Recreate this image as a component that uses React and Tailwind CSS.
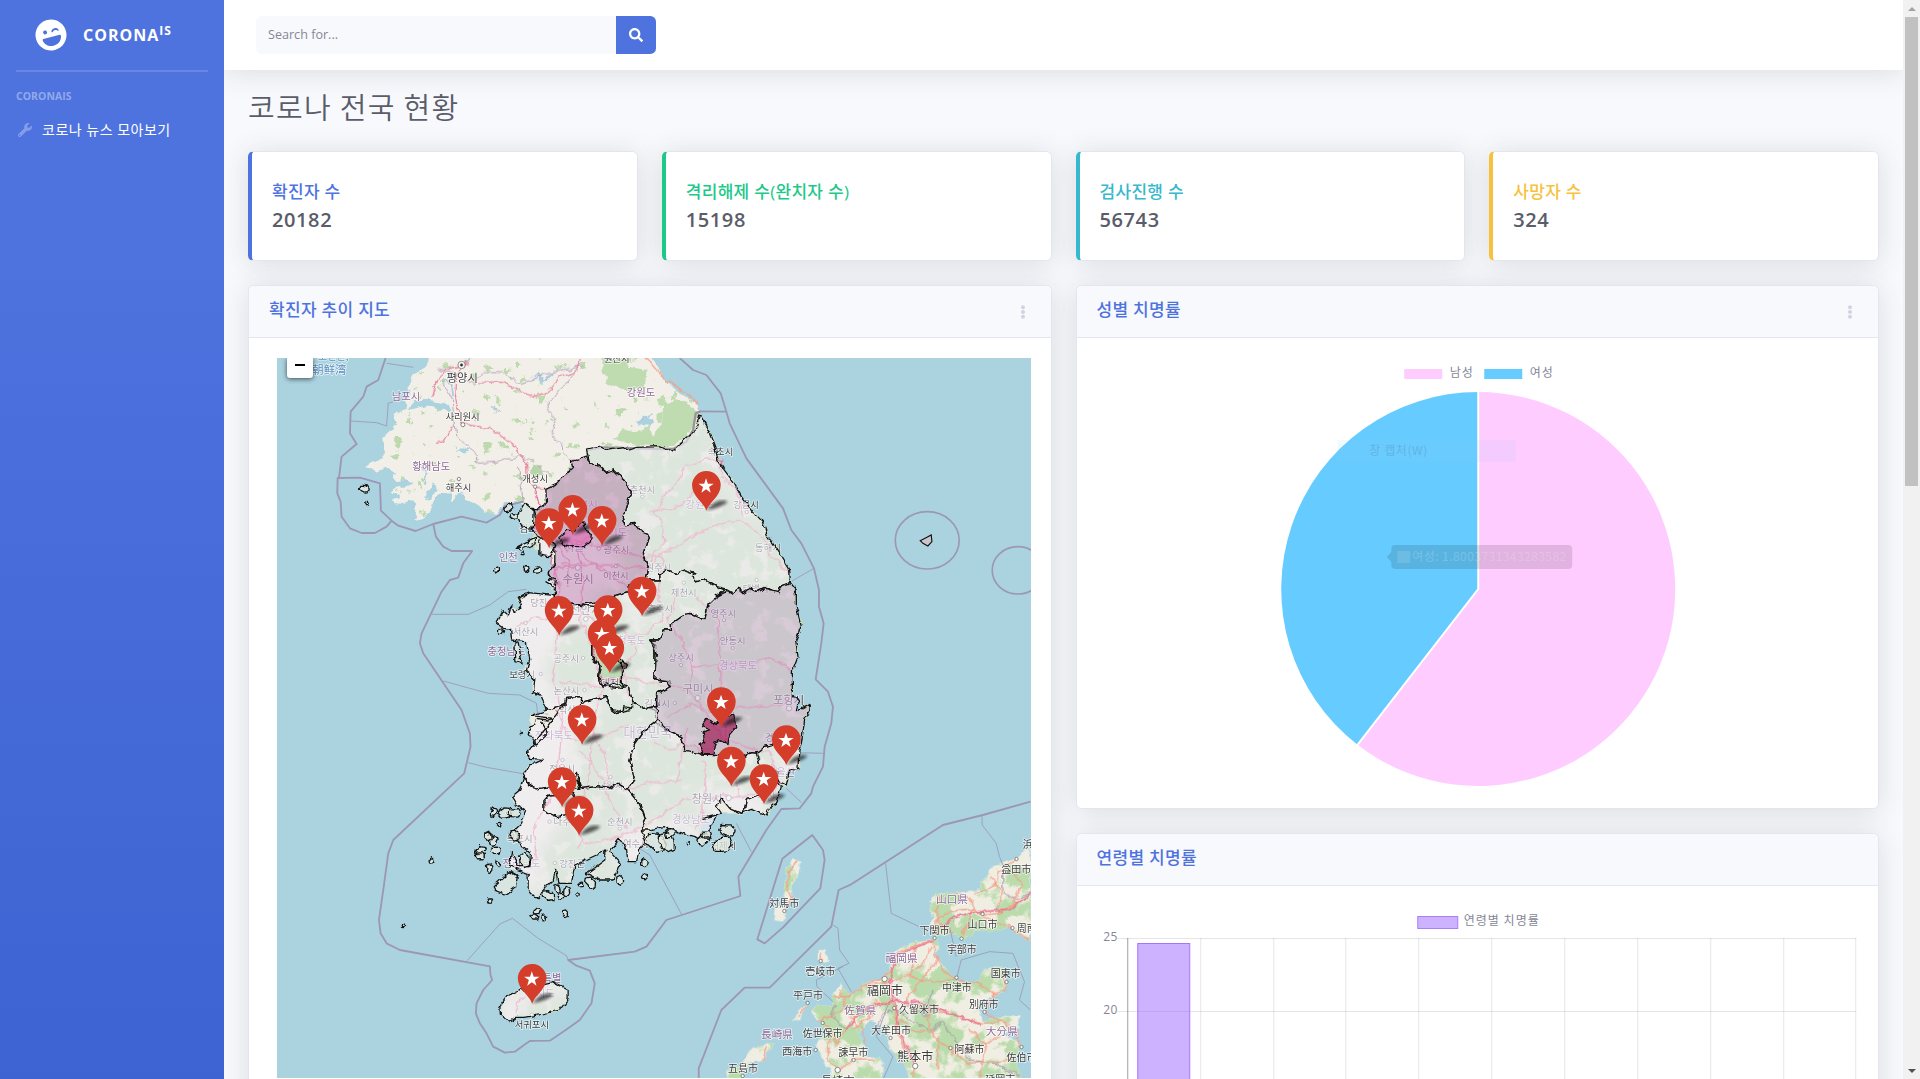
import React from "react";
import { FaLaughWink, FaWrench, FaSearch, FaEllipsisV } from "react-icons/fa";

const stats = [
  { label: "확진자 수", value: "20182", border: "border-l-[#4e73df]", text: "text-[#4e73df]" },
  { label: "격리해제 수(완치자 수)", value: "15198", border: "border-l-[#1cc88a]", text: "text-[#1cc88a]" },
  { label: "검사진행 수", value: "56743", border: "border-l-[#36b9cc]", text: "text-[#36b9cc]" },
  { label: "사망자 수", value: "324", border: "border-l-[#f6c23e]", text: "text-[#f6c23e]" },
];

const NORTH =
  "M485 0L470 50L430 72L412 108L425 135L395 152L412 172L370 195L382 215L340 265L345 310L320 330L285 355L320 362L350 352L375 365L370 390L395 400L365 425L388 440L365 455L402 460L430 450L440 480L430 510L455 505L475 490L500 440L520 425L545 430L540 455L575 425L590 450L625 465L640 480L680 495L700 460L750 455L790 475L830 470L950 400L1290 320L1290 190L1280 158L1245 140L1200 105L1170 60L1130 0Z";
const SOUTH =
  "M950 318L905 335L890 370L860 400L828 415L830 455L810 480L790 478L800 515L780 570L810 615L838 618L855 645L835 670L855 735L780 728L745 745L755 765L735 790L725 765L715 795L700 782L680 820L700 835L722 838L725 870L770 875L780 930L770 960L795 985L790 1030L815 1040L832 1080L785 1097L775 1150L800 1185L770 1210L780 1225L820 1228L775 1250L762 1280L750 1320L725 1340L740 1365L770 1385L755 1420L735 1440L755 1490L785 1510L780 1550L745 1550L725 1505L718 1550L775 1570L775 1620L800 1645L825 1615L850 1590L857 1555L865 1600L905 1600L915 1545L980 1515L1005 1500L1005 1530L950 1570L990 1590L1030 1590L1052 1540L1020 1505L1050 1465L1070 1495L1075 1535L1100 1535L1110 1500L1130 1480L1140 1440L1180 1430L1240 1450L1290 1465L1300 1420L1355 1390L1415 1390L1445 1378L1490 1398L1520 1360L1535 1310L1555 1300L1560 1260L1585 1255L1590 1210L1605 1110L1620 1085L1622 1062L1580 1085L1568 1030L1568 965L1585 920L1578 870L1595 830L1580 770L1580 720L1562 700L1560 660L1530 610L1495 560L1478 515L1450 485L1415 440L1390 395L1360 355L1335 290L1315 240L1290 195L1275 245L1250 265L1210 303L1170 290L1100 292L1080 300L1060 290L1010 298L990 288L950 297ZM690 1970L715 1935L770 1915L850 1898L895 1920L895 1945L870 1980L805 1995L765 2002L738 2002L718 2015L692 1990Z";
const JAPAN =
  "M1143 55L1100 80L1040 105L1010 140L975 185L920 188L860 190L840 215L850 260L845 300L858 320L900 310L945 330L975 300L1040 305L1080 290L1143 335ZM545 530L550 490L570 462L590 480L605 500L640 465L690 450L720 420L735 365L800 335L860 325L870 350L860 380L900 430L920 450L980 460L1000 420L1060 410L1075 455L1060 490L1010 510L985 540L1000 570L1060 560L1110 555L1105 590L1060 610L1110 640L1100 700L1120 760L790 760L760 700L720 660L715 610L690 585L660 570L640 600L625 610L650 650L640 680L690 680L700 720L690 760L560 760L520 690L500 640L530 610L520 590L485 545L500 525ZM430 85L455 92L450 120L430 160L425 200L400 275L370 270L375 240L410 215L402 180L415 110ZM505 360L530 360L540 395L505 400ZM475 520L450 570L430 580L445 545ZM330 645L375 640L350 670L340 690L300 700L280 720L285 760L230 760L232 720L270 710L300 670Z";

const NATIONAL =
  "M355 0L325 90L290 110L280 140L242 185L240 250L260 282L215 320L207 384M203 384L202 430L212 455L215 500L240 535L275 549L315 549L350 530L365 512L333 482L330 400L270 383ZM365 512L385 527L437 543L490 522L575 500L650 518L690 495L705 468L760 455M490 522L498 560L520 590L545 603L607 603L580 640L565 683L540 690L515 725L455 850L450 880L460 910L575 1080L600 1150L602 1190L583 1270L370 1470L355 1510L340 1620L327 1710L332 1750L350 1780L390 1800L660 1849L662 1875L667 1890L640 1920L620 1960L618 1990L630 2020L650 2050L670 2090L705 2108L735 2105L770 2080L780 2073L840 2072L880 2045L930 2010L965 1960L975 1900L960 1862L920 1847L895 1830L1095 1805L1130 1790L1190 1710L1412 1638L1406 1580L1490 1440L1535 1377L1590 1375L1625 1330L1630 1310L1660 1250L1665 1190L1685 1120L1690 1070L1675 1025L1638 988L1655 880L1662 820L1648 770L1648 720L1633 655L1595 580L1565 540L1540 475L1430 325L1380 220L1370 185L1353 130L1310 75L1270 60L1230 24M1290 184L1370 185M1628 1455L1660 1500L1665 1530L1652 1615L1540 1732L1485 1780L1463 1768L1538 1526ZM1287 2190L1287 2155L1355 1980L1425 1913L1500 1913L1685 1730L1707 1620L1745 1603L2020 1425L2140 1395L2283 1355";
const MINOR =
  "M242 213L320 218L350 228L355 160L400 145M350 40L430 52M485 793L595 793L660 765L715 725L770 718M520 993L655 1030L750 1035L800 1060L803 1088L835 1093M595 1238L650 1252L765 1272M592 1832L690 1722L728 1705L805 1765L890 1817L895 1830M1140 1515L1235 1692M1140 1515L1100 1490M1567 693L1633 655M1590 1208L1660 1210M1550 1315L1595 1357M1400 1420L1445 1505M2137 1395L2138 1425L2180 1480L2190 1520L2200 1545M1848 1540L1865 1690L1970 1740M1690 1725L1705 1735L1710 1800L1738 1840L1705 1855L1745 1925M1640 1890L1720 1850M1640 1890L1642 1910L1690 1955M2060 1890L2075 1830L2160 1805L2230 1810L2265 1895L2250 1950L2283 1980M1855 1965L1820 2060L1870 2120L1840 2190M2040 1730L2060 1820";
const NORTH_ADMIN =
  "M505 55L560 75L610 100L640 65L700 65L750 100L830 75L870 60L940 50M935 40L900 85L840 155L830 180L860 210L840 250L880 285L882 310L905 335M515 95L550 150L560 260L620 310L625 340L690 335L745 318L790 330M745 350L755 410L760 455M800 345L840 370";
const NORTH_ROADS =
  "M590 35L560 75L558 130L568 190L579 222L660 235L730 280L770 340L772 385L795 412L830 415M627 98L690 100L740 115L800 140L830 130L870 80L925 60L935 25M600 40L540 55L500 90L485 140M550 225L520 275L498 280";
const SOUTH_ROADS =
  "M795 412L820 520L870 560L920 590L940 700L930 800L960 880L1000 1000L975 1100L960 1250L940 1360L930 1490M910 570L1000 590L1100 620L1180 620L1165 720L1180 800L1130 850L1000 870L940 760M840 620L870 700L865 820L850 1000L880 1100L870 1200L860 1300L790 1440L800 1530M920 650L860 650L850 710M870 640L1140 655L1165 620L1280 550L1360 520L1410 510L1480 560L1510 620L1560 680M1140 485L1230 470L1290 400M1140 640L1160 600L1185 575L1180 510L1150 490L1200 420L1250 350L1310 325L1355 340L1355 380L1415 440L1420 500M1225 720L1195 810L1240 880L1270 955L1340 945L1440 940L1500 920L1570 960M1270 955L1260 1020L1330 1120L1355 1160L1430 1190L1500 1210L1530 1300L1500 1350M1345 790L1350 900L1350 1000L1355 1100L1390 1220L1410 1340M1000 1000L1060 980L1150 1000L1260 1020M930 1200L1010 1300L1060 1320L1140 1300L1240 1290M940 1480L1050 1460L1140 1420L1240 1350L1320 1340L1420 1340L1490 1330M1280 740L1320 780L1340 790M970 1140L1010 1230L1010 1330L1070 1440M740 830L800 800L870 820M1150 1180L1200 1200L1240 1180L1290 1200L1340 1190M1360 1060L1420 1075L1550 1060M1200 1100L1260 1060L1340 1090M1220 1300L1240 1200L1250 1130M1280 1440L1310 1330L1300 1230M930 600L960 640L1000 660L1090 720L1140 790M850 560L890 600L960 560M870 590L900 640L890 710M870 1000L940 1000L1000 1010M860 1080L900 1170L1000 1160L1080 1120M1010 800L1060 840L1100 900L1060 960L1080 1040M735 1985L750 1950L780 1930";
const JAPAN_ROADS =
  "M850 330L800 345L745 370L725 420L690 450L640 470L600 500L555 500M850 340L860 380L880 420L920 448L990 465L1040 490L1020 520L1000 550L1060 575L1100 600L1110 650M705 450L720 500L735 540L740 600L770 660L800 700L790 744M735 510L650 530L600 580L560 640L540 590L515 580M770 520L830 540L900 550L1000 580L1050 575M845 350L820 400L770 440L720 460L650 470M870 380L830 430L760 520M905 310L860 270L900 245L970 235L1000 255L1050 250L1100 220L1143 190M880 200L860 240L860 310M920 190L970 210L965 260L940 310M975 190L1040 160L1050 120L1100 85M1000 260L1080 290L1143 330M1020 140L1060 190L1040 240M1090 130L1120 160L1090 220M600 560L640 600L650 640M540 620L535 690L570 720L612 690L680 690M570 480L590 540L545 560L500 570M800 350L780 440L850 460L920 450M830 540L850 620L900 655L960 660L1050 620M870 620L860 720M900 655L950 700L1100 690M740 560L790 600L870 610M960 600L1010 640L990 740M1060 420L1070 480L1030 500M680 510L660 560L610 600M445 90L418 125L412 165L425 205L410 240M470 530L445 560M350 650L340 690M515 370L515 390";

/* Outlines of provinces and metropolitan cities with the fill of their case count. */
const provinces = [
  ["#f1eef6", "M950 297L990 288L1010 298L1060 290L1080 300L1100 292L1170 290L1210 303L1250 265L1275 245L1290 195L1315 240L1335 290L1345 330L1360 355L1390 395L1415 440L1450 485L1478 515L1495 560L1530 610L1560 660L1562 698L1540 705L1525 725L1490 715L1460 725L1440 715L1420 728L1405 715L1390 730L1365 716L1340 710L1305 690L1280 695L1265 680L1275 670L1245 660L1220 670L1190 660L1170 675L1172 690L1125 690L1135 650L1120 610L1138 555L1115 545L1095 520L1065 525L1060 500L1070 465L1085 430L1065 390L1045 375L1030 360L1010 368L985 345L960 340Z"],
  ["#c994c7", "M950 318L905 335L908 352L890 370L860 400L828 415L830 455L810 480L790 478L800 515L780 540L838 580L855 590L855 640L835 670L855 705L857 740L858 755L920 765L985 755L1040 735L1075 725L1075 705L1125 690L1135 650L1120 610L1138 555L1115 545L1095 520L1065 525L1060 500L1070 465L1085 430L1065 390L1045 375L1030 360L1010 368L985 345L960 340Z"],
  ["#df65b0", "M870 560L895 540L910 545L940 515L950 545L965 550L962 575L945 590L900 590L875 580Z"],
  ["#f1eef6", "M810 570L840 560L858 590L838 620L810 615ZM830 690L860 685L855 720Z"],
  ["#f1eef6", "M855 737L780 728L745 745L755 765L735 790L725 765L715 795L700 782L680 820L700 835L722 838L725 870L770 875L780 930L770 960L795 985L790 1030L815 1040L832 1080L885 1060L888 1042L935 1040L935 1060L1010 1040L1020 1075L1060 1088L1062 1070L1090 1075L1090 1060L1075 1010L1040 1015L1000 1010L985 990L990 950L968 920L970 870L1000 830L985 770L920 765L858 755Z"],
  ["#f1eef6", "M1000 840L985 770L1040 735L1075 725L1125 690L1172 690L1170 675L1190 660L1220 670L1245 660L1275 670L1265 680L1280 695L1305 690L1340 710L1365 720L1315 765L1305 810L1260 790L1240 795L1205 820L1205 840L1180 840L1170 870L1140 870L1155 890L1155 990L1200 995L1205 1010L1160 1030L1162 1070L1120 1075L1090 1055L1075 1010L1055 1005L1055 975L1070 945L1020 900Z"],
  ["none", "M968 880L990 850L1010 890L1035 930L1055 940L1055 980L1060 1010L1030 1000L1020 1010L1010 1000L1000 1012L988 985L995 950L970 930Z"],
  ["#d4b9da", "M1580 720L1580 770L1595 830L1578 870L1585 920L1568 965L1568 1030L1585 1055L1580 1085L1610 1070L1622 1062L1620 1085L1605 1110L1595 1180L1510 1182L1485 1190L1465 1210L1440 1208L1410 1225L1370 1215L1295 1212L1245 1200L1235 1160L1200 1145L1160 1120L1155 1080L1140 1075L1160 1070L1162 1030L1205 1010L1190 995L1155 990L1160 910L1140 870L1170 870L1180 840L1205 840L1205 820L1240 795L1260 790L1305 810L1315 765L1340 740L1370 725L1390 730L1405 715L1420 728L1440 715L1460 725L1490 715L1525 725L1540 705L1562 698Z"],
  ["#980043", "M1392 1090L1398 1130L1380 1150L1375 1180L1350 1172L1335 1180L1330 1210L1300 1212L1288 1185L1305 1175L1300 1145L1320 1140L1295 1130L1310 1108L1340 1120Z"],
  ["#f1eef6", "M832 1080L785 1097L850 1105L835 1110L800 1105L775 1150L800 1185L835 1150L815 1115M790 1185L770 1210L780 1225L820 1228L775 1250L762 1280L785 1312L800 1317L840 1310L920 1290L935 1315L980 1310L1020 1315L1045 1300L1075 1317L1095 1290L1080 1230L1095 1180L1120 1145L1165 1110L1162 1070L1120 1075L1090 1055L1085 1078L1040 1088L1020 1075L1010 1040L935 1060L935 1040L888 1042L885 1060Z"],
  ["#f1eef6", "M762 1280L750 1320L725 1340L740 1365L770 1385L755 1420L735 1440L755 1490L785 1510L780 1550L745 1550L725 1505L718 1550L775 1570L775 1620L800 1645L825 1615L850 1590L857 1555L865 1600L905 1600L915 1545L980 1515L1005 1500L1005 1530L950 1570L990 1590L1030 1590L1052 1540L1020 1505L1050 1465L1070 1495L1075 1535L1100 1535L1110 1500L1130 1480L1115 1440L1128 1410L1110 1360L1075 1317L1045 1300L1020 1315L980 1310L935 1315L920 1270L930 1315L840 1310L800 1317L785 1312Z"],
  ["none", "M840 1335L905 1330L920 1350L905 1390L860 1400L822 1382L822 1355Z"],
  ["#f1eef6", "M1165 1110L1200 1145L1235 1160L1245 1200L1295 1212L1370 1215L1410 1225L1440 1208L1465 1210L1470 1245L1530 1270L1500 1320L1430 1350L1425 1375L1415 1390L1380 1375L1355 1345L1340 1370L1355 1390L1300 1405L1340 1395L1320 1440L1290 1465L1240 1450L1180 1430L1140 1440L1115 1440L1128 1410L1110 1360L1075 1317L1095 1290L1080 1230L1095 1180L1120 1145Z"],
  ["#f1eef6", "M1510 1182L1485 1190L1460 1210L1470 1245L1500 1270L1520 1290L1550 1305L1560 1260L1585 1255L1588 1200L1595 1180Z"],
  ["#f1eef6", "M1520 1290L1500 1320L1430 1350L1425 1375L1415 1390L1445 1378L1490 1398L1495 1380L1520 1360L1535 1310Z"],
  ["#f1eef6", "M690 1970L715 1935L770 1915L850 1898L895 1920L895 1945L870 1980L805 1995L765 2002L738 2002L718 2015L692 1990Z"],
];

const islands = [
  "M720 1565L745 1580L740 1610L710 1633L675 1620L670 1610Z",
  "M765 460L790 480L788 535L755 530L742 500Z",
  "M742 592L802 562L795 582L750 600Z",
  "M735 875L745 880L757 942L738 935Z",
];
const DOKDO = "M1952 572L1975 560L1985 555L1987 575L1975 588L1960 580Z";

const islets = [
  [655, 1458, 13], [670, 1472, 13], [632, 1500, 13], [630, 1518, 12], [678, 1502, 13], [685, 1538, 8], [658, 1555, 11], [485, 1532, 8], [403, 1728, 6],
  [660, 1653, 9], [835, 1637, 17], [865, 1618, 12], [890, 1625, 11], [875, 1642, 9], [932, 1605, 7], [922, 1633, 6], [963, 1597, 16], [1050, 1590, 12],
  [1123, 1580, 9], [803, 1683, 10], [793, 1700, 10], [822, 1702, 8], [887, 1691, 11], [1125, 1538, 13], [672, 1387, 12], [705, 1390, 18], [732, 1388, 17],
  [687, 1423, 6], [655, 1460, 12], [693, 847, 9], [715, 473, 13], [733, 500, 11], [283, 417, 14], [290, 460, 6], [680, 660, 8], [770, 656, 8], [803, 662, 9],
  [758, 610, 5], [1160, 1478, 30], [1192, 1475, 28], [1255, 1480, 7], [1300, 1470, 16], [1358, 1484, 26], [1372, 1440, 22], [735, 1455, 15], [765, 1530, 20],
  [756, 1149, 2], [1200, 1450, 15], [1310, 1455, 13],
];
const isletPath = ([x, y, r], i) =>
  "M" +
  [0, 1, 2, 3, 4, 5, 6, 7]
    .map((k) => {
      const q = r * (0.65 + 0.5 * Math.abs(Math.sin(i * 3.7 + k * 2.3)));
      const a = (k * Math.PI) / 4;
      return (x + q * Math.cos(a)).toFixed(1) + " " + (y + q * Math.sin(a)).toFixed(1);
    })
    .join("L") +
  "Z";

const pins = [
  [1310, 363], [909, 435], [997, 468], [838, 475], [1117, 680], [1015, 736], [868, 738], [997, 808], [1020, 850],
  [1355, 1012], [937, 1065], [1550, 1126], [1385, 1190], [1483, 1243], [877, 1252], [928, 1338], [787, 1842],
];

const P = "#8d6a96";
const K = "#3c3c3c";
const labels = [
  ["조선만,", 190, 30, 30, "#5b8fc0"], ["朝鲜湾", 178, 71, 34, "#5b8fc0"], ["평양시", 577, 97, 34, K], ["남포시", 408, 149, 31, P], ["사리원시", 578, 210, 28, K],
  ["황해남도", 484, 359, 31, P], ["해주시", 566, 424, 28, K], ["개성시", 796, 397, 28, K], ["강원도", 1114, 138, 31, P], ["원산시", 1041, 35, 28, K],
  ["춘천시", 1118, 429, 28, K], ["의정부시", 927, 474, 31, P], ["김포시", 788, 545, 28, K], ["경기도", 1030, 557, 31, P], ["서울", 913, 603, 34, P],
  ["광주시", 1040, 610, 28, K], ["인천", 715, 633, 31, P], ["수원시", 925, 700, 34, K], ["이천시", 1038, 686, 28, K], ["원주시", 1166, 664, 28, K],
  ["속초시", 1352, 316, 28, K], ["강원도", 1290, 474, 31, P], ["강릉시", 1429, 474, 28, K], ["동해시", 1495, 603, 28, K], ["태백시", 1458, 726, 28, K],
  ["제천시", 1242, 738, 28, K], ["당진시", 820, 768, 28, K], ["천안시", 948, 793, 34, K], ["서산시", 767, 856, 28, K], ["충청남도", 710, 915, 31, P],
  ["보령시", 757, 984, 28, K], ["공주시", 889, 937, 28, K], ["대전", 1020, 1010, 31, P], ["논산시", 890, 1033, 28, K], ["충청북도", 1071, 881, 31, P],
  ["충주시", 1171, 786, 28, K], ["익산시", 905, 1088, 28, K], ["전라북도", 852, 1168, 31, P], ["정읍시", 877, 1265, 28, K], ["남원시", 1022, 1317, 28, K],
  ["대한민국", 1135, 1162, 40, P], ["김천시", 1162, 1070, 28, K], ["영주시", 1361, 800, 28, K], ["안동시", 1389, 883, 28, K], ["상주시", 1234, 934, 28, K],
  ["경상북도", 1405, 956, 31, P], ["구미시", 1285, 1028, 34, K], ["포항시", 1557, 1061, 34, K], ["경주시", 1525, 1173, 28, K], ["울산", 1548, 1277, 31, P],
  ["창원시", 1312, 1358, 34, K], ["경상남도", 1264, 1418, 31, P], ["부산", 1490, 1350, 31, P], ["나주시", 890, 1426, 28, K], ["순천시", 1050, 1425, 28, K],
  ["목포시", 750, 1477, 28, K], ["전라남도", 755, 1552, 31, P], ["강진군", 907, 1552, 28, K], ["여수시", 1098, 1490, 28, K], ["거제시", 1361, 1496, 28, K],
  ["제주특별", 818, 1896, 31, P], ["자치도", 812, 1941, 31, P], ["서귀포시", 786, 2033, 28, K],
  ["対馬市", 1544, 1672, 30, K], ["壱岐市", 1652, 1874, 30, K], ["平戸市", 1615, 1947, 30, K], ["佐賀県", 1772, 1992, 32, P], ["長崎県", 1522, 2063, 32, P],
  ["佐世保市", 1659, 2061, 30, K], ["西海市", 1583, 2115, 30, K], ["諫早市", 1751, 2118, 30, K], ["五島市", 1420, 2166, 30, K], ["長崎市", 1704, 2205, 34, K],
  ["福岡県", 1896, 1836, 32, P], ["福岡市", 1846, 1935, 36, K], ["久留米市", 1948, 1988, 30, K], ["大牟田市", 1864, 2052, 30, K], ["熊本市", 1937, 2133, 36, K],
  ["阿蘇市", 2100, 2109, 30, K], ["大分県", 2197, 2056, 32, P], ["別府市", 2143, 1974, 30, K], ["中津市", 2062, 1924, 30, K], ["国東市", 2209, 1882, 30, K],
  ["宇部市", 2077, 1808, 30, K], ["下関市", 1995, 1753, 30, K], ["山口県", 2047, 1660, 32, P], ["山口市", 2139, 1733, 30, K], ["益田市", 2240, 1570, 30, K],
  ["浜田市", 2305, 1494, 30, K], ["周南市", 2287, 1747, 30, K], ["佐伯市", 2256, 2132, 30, K], ["延岡市", 2192, 2200, 30, K],
];
const towns = [
  [579, 224, 6], [567, 387, 5], [796, 410, 5], [1118, 440, 5], [924, 653, 8], [1038, 648, 5], [987, 596, 5], [1431, 486, 5], [1461, 690, 5], [1242, 698, 5],
  [767, 819, 5], [948, 807, 7], [813, 972, 5], [940, 924, 5], [944, 1020, 5], [878, 1230, 5], [1022, 1281, 5], [1363, 810, 5], [1389, 894, 5], [1234, 945, 5],
  [1284, 1044, 8], [1215, 1059, 5], [1558, 1075, 8], [1377, 1344, 8], [839, 1415, 5], [1050, 1436, 5], [855, 1539, 5], [786, 1994, 5], [1544, 1683, 5],
  [1653, 1833, 5], [1614, 1959, 5], [1659, 2019, 5], [1638, 2100, 5], [1752, 2130, 5], [1704, 2160, 8], [1845, 1887, 8], [1874, 1974, 5], [1863, 2064, 5],
  [1937, 2148, 8], [2043, 2094, 5], [2145, 1986, 5], [2061, 1883, 5], [2211, 1896, 5], [2076, 1766, 5], [1995, 1764, 5], [2139, 1692, 5], [2241, 1527, 5],
  [2229, 1734, 5], [2256, 2091, 5], [1419, 2178, 5],
];

function Pin({ x, y }) {
  return (
    <g transform={`translate(${x} ${y})`}>
      <path d="M0 118L22 96Q45 84 64 92Q50 108 0 118Z" fill="#111" opacity="0.65" filter="url(#soft)" />
      <path d="M0 119C-8 94-43 76-43 43A43 43 0 0 1 43 43C43 76 8 94 0 119Z" fill="#d33d2a" />
      <path d="M-1 22L4.500 38L22 38L8 48L13 65L-1 55L-15 65L-10 48L-24 38L-6.500 38Z" fill="#fff" />
    </g>
  );
}

function CoronaMap() {
  return (
    <svg className="block h-[720px] w-full" viewBox="21 24 2262 2160" preserveAspectRatio="none">
      <defs>
        <filter id="rough" x="0" y="0" width="2300" height="2200" filterUnits="userSpaceOnUse" colorInterpolationFilters="sRGB">
          <feTurbulence type="fractalNoise" baseFrequency="0.035" numOctaves="3" seed="4" />
          <feDisplacementMap in="SourceGraphic" scale="22" xChannelSelector="R" yChannelSelector="G" />
        </filter>
        <filter id="jag" x="0" y="0" width="2300" height="2200" filterUnits="userSpaceOnUse" colorInterpolationFilters="sRGB">
          <feTurbulence type="fractalNoise" baseFrequency="0.05" numOctaves="2" seed="9" />
          <feDisplacementMap in="SourceGraphic" scale="17" xChannelSelector="R" yChannelSelector="G" />
        </filter>
        <filter id="forest" x="0" y="0" width="2300" height="2200" filterUnits="userSpaceOnUse" colorInterpolationFilters="sRGB">
          <feTurbulence type="fractalNoise" baseFrequency="0.014" numOctaves="5" seed="12" />
          <feColorMatrix values="0 0 0 0 0.73 0 0 0 0 0.86 0 0 0 0 0.67 9 0 0 0 -4.1" />
        </filter>
        <filter id="fields" x="0" y="0" width="2300" height="2200" filterUnits="userSpaceOnUse" colorInterpolationFilters="sRGB">
          <feTurbulence type="fractalNoise" baseFrequency="0.02" numOctaves="5" seed="33" />
          <feColorMatrix values="0 0 0 0 0.94 0 0 0 0 0.93 0 0 0 0 0.88 9 0 0 0 -5" />
        </filter>
        <filter id="specks" x="0" y="0" width="2300" height="2200" filterUnits="userSpaceOnUse" colorInterpolationFilters="sRGB">
          <feTurbulence type="fractalNoise" baseFrequency="0.03" numOctaves="4" seed="21" />
          <feColorMatrix values="0 0 0 0 0.74 0 0 0 0 0.85 0 0 0 0 0.68 18 0 0 0 -12.2" />
        </filter>
        <filter id="soft"><feGaussianBlur stdDeviation="4" /></filter>
        <filter id="haze" x="-20%" y="-20%" width="140%" height="140%"><feGaussianBlur stdDeviation="22" /></filter>
        <clipPath id="south"><path d={SOUTH} /></clipPath>
        <clipPath id="japan"><path d={JAPAN} transform="translate(1140 1440)" /></clipPath>
        <clipPath id="north"><path d={NORTH} /></clipPath>
      </defs>
      <rect x="0" y="0" width="2300" height="2200" fill="#aad3df" />
      <g filter="url(#rough)">
        <path d={NORTH} fill="#f2efe9" />
        <path d={SOUTH} fill="#bfdab6" />
        <path d={JAPAN} transform="translate(1140 1440)" fill="#f0eee2" />
        <g clipPath="url(#south)">
          <g filter="url(#haze)" fill="#eeebe2">
            <path d="M650 700L860 720L990 760L960 820L880 840L820 950L850 1040L1000 1030L960 1110L900 1160L930 1230L850 1290L900 1340L880 1420L800 1520L820 1600L740 1660L600 1500Z" />
            <path d="M780 560L960 540L1060 640L1060 700L900 750L820 700ZM1260 1330L1400 1320L1500 1340L1480 1420L1350 1420ZM1520 1220L1600 1180L1600 1280L1540 1300ZM1070 740L1140 740L1140 800L1080 820ZM1320 310L1350 310L1470 500L1430 500Z" />
            <path d="M680 1960L770 1910L890 1890L900 1920L780 1940L740 2010L690 2030ZM1040 1440L1150 1420L1300 1440L1300 1500L1040 1560Z" />
          </g>
          <rect x="0" y="0" width="2300" height="2200" filter="url(#fields)" opacity="0.65" />
        </g>
        <g clipPath="url(#japan)"><rect x="0" y="0" width="2300" height="2200" filter="url(#forest)" /></g>
        <g clipPath="url(#north)"><rect x="0" y="0" width="2300" height="2200" filter="url(#specks)" /></g>
        <path d="M995 24L1080 24L1075 50L1130 60L1125 110L1080 125L1010 100L1015 75L995 72ZM1030 270L1060 235L1100 245L1140 230L1150 260L1175 220L1185 160L1210 150L1260 165L1285 190L1270 230L1250 262L1200 292L1100 285ZM1165 145L1185 140L1190 165L1170 170ZM1160 190L1180 185L1175 215L1160 215Z" fill="#bfdcb1" />
        <path d="M1100 210L1125 200L1150 215L1140 230L1115 228ZM545 285L560 300L575 292L600 298L580 310ZM365 395L400 390L430 400L400 415ZM460 440L490 400L500 420L480 450ZM310 215L335 205L345 220ZM430 150L480 150L520 155L545 180L535 190L480 165L430 180L415 175Z" fill="#aad3df" />
        <path d="M785 350L815 345L820 375L795 380L780 370Z" fill="#b7d3a8" />
        <path d="M590 40L600 24M520 90L545 100L550 140M1100 215L1150 190M785 90L800 75L820 95L850 70M660 170L690 180M450 350L470 370L465 400" stroke="#aacbe0" strokeWidth="5" fill="none" />
      </g>
      <path d="M1130 24L1160 60L1190 90L1245 125L1285 160" fill="none" stroke="#f3a088" strokeWidth="4" filter="url(#rough)" />
      <g fill="none" strokeLinejoin="round" filter="url(#rough)">
        <path d={NORTH_ADMIN} stroke="#b8a3bd" strokeWidth="3" />
        <path d={NORTH_ROADS} stroke="#ea7f9b" strokeWidth="3.500" />
        <path d={SOUTH_ROADS} stroke="#e66f98" strokeWidth="4" />
        <g transform="translate(1140 1440)">
          <path d="M735 540L700 560L680 590M735 540L800 580L840 600L880 580L910 620L960 690L1040 700L1110 740M1060 130L1060 180L1100 210L1143 185M560 520L545 560L590 600L600 570M850 480L830 560L760 520" stroke="#a08fa8" strokeWidth="3" />
          <path d={JAPAN_ROADS} stroke="#f3a088" strokeWidth="4" />
          <path d="M850 335L800 350L740 380L720 440L740 540L745 600L800 700M735 510L830 520L900 550L990 580M735 510L640 540L590 600M860 310L900 270L980 245L1080 240L1143 190" stroke="#e87590" strokeWidth="5" />
        </g>
      </g>
      <g fill="none" stroke="#9d96b6" strokeLinejoin="round">
        <path d={NATIONAL} strokeWidth="5.500" />
        <ellipse cx="1973" cy="571" rx="96" ry="86" strokeWidth="5" />
        <ellipse cx="2245" cy="661" rx="77" ry="71" strokeWidth="5" />
        <path d={MINOR} strokeWidth="2.500" />
        <path d="M955 300L990 292L1100 295L1210 297L1250 275L1270 240L1278 190L1292 184" stroke="#9a949a" strokeWidth="7" />
      </g>
      <g fill="#fff" stroke="#555" strokeWidth="2">
        {towns.map(([x, y, r]) => <circle key={`${x}-${y}`} cx={x} cy={y} r={r} />)}
        <circle cx="575" cy="45" r="11" /><circle cx="575" cy="45" r="4" fill="#333" />
      </g>
      <g textAnchor="middle" className="font-['Noto_Sans_CJK_KR','Noto_Sans_CJK_JP',sans-serif]">
        {labels.map(([t, x, y, s, c]) => (
          <text key={`${t}${x}`} x={x} y={y} fontSize={s} fill={c} stroke="#fff" strokeOpacity="0.7" strokeWidth="5" paintOrder="stroke" strokeLinejoin="round">{t}</text>
        ))}
      </g>
      <g stroke="#111" strokeWidth="3.800" strokeLinejoin="round" filter="url(#jag)">
        <g fillOpacity="0.6">{provinces.map(([c, d]) => <path key={d} d={d} fill={c} />)}</g>
        <g fill="#e4eae0" fillOpacity="0.8">
          {islands.map((d) => <path key={d} d={d} />)}
          {islets.map((s, i) => <path key={i} d={isletPath(s, i)} />)}
        </g>
      </g>
      <path d={DOKDO} fill="#cdc5ce" stroke="#111" strokeWidth="3.500" />
      {pins.map(([x, y]) => <Pin key={`${x}-${y}`} x={x} y={y} />)}
    </svg>
  );
}

function PieChart() {
  return (
    <svg className="block h-[470px] w-full font-['Noto_Sans_CJK_KR',sans-serif]" viewBox="1077 338 801 470">
      <rect x="1404" y="369" width="38" height="10" fill="#fcf" />
      <rect x="1484" y="369" width="38" height="10" fill="#6cf" />
      <g fontSize="12" fill="#858796">
        <text x="1449.500" y="376.500" textLength="23">남성</text>
        <text x="1529.500" y="376.500" textLength="23">여성</text>
      </g>
      <path d="M1478 589L1478 392A197 197 0 1 1 1357.300 744.700Z" fill="#fcf" />
      <path d="M1478 589L1357.300 744.700A197 197 0 0 1 1478 392Z" fill="#6cf" />
      <path d="M1478 391L1478 589L1357 745.200" fill="none" stroke="#fff" strokeWidth="2" />
      <rect x="1337" y="440" width="179" height="22" fill="#91c9f7" opacity="0.1" />
      <text x="1369" y="455" fontSize="12" fill="#333" opacity="0.15" textLength="58">창 캡처(W)</text>
      <path d="M1395 545H1568Q1572 545 1572 549V565Q1572 569 1568 569H1395Q1391 569 1391 565V562L1386.500 557L1391 552V549Q1391 545 1395 545Z" fill="#000" opacity="0.12" />
      <rect x="1397" y="551" width="13" height="12" fill="#fff" opacity="0.13" />
      <text x="1412" y="560.500" fontSize="12" fill="#fff" opacity="0.18" textLength="154">여성: 1.8003731343283582</text>
    </svg>
  );
}

const gridX = [1200.5, 1273.5, 1345.5, 1418.5, 1491.5, 1564.5, 1637.5, 1710.5, 1783.5, 1855.5];

function BarChart() {
  return (
    <svg className="block h-[469px] w-full" viewBox="1077 886 801 469">
      <rect x="1417.500" y="916.500" width="40" height="12" fill="#ccb2ff" stroke="#a97dff" />
      <text x="1463.500" y="924.500" fontSize="12" fill="#858796" textLength="75" className="font-['Noto_Sans_CJK_KR',sans-serif]">연령별 치명률</text>
      <g stroke="#000" strokeOpacity="0.1">
        <path d="M1117 938.500H1856M1117 1011.500H1856" />
        {gridX.map((x) => <path key={x} d={`M${x} 938V1355`} />)}
      </g>
      <path d="M1127.500 938V1355" stroke="#000" strokeOpacity="0.38" />
      <rect x="1137.500" y="943.500" width="52" height="500" fill="#9966ff" fillOpacity="0.5" stroke="#a474ff" />
      <g fontSize="12" fill="#858796" className="font-['Open_Sans',sans-serif]">
        <text x="1103" y="941" textLength="14">25</text>
        <text x="1103" y="1014" textLength="14">20</text>
      </g>
    </svg>
  );
}

function Panel({ title, menu, children }) {
  return (
    <section className="rounded-[5.6px] border border-[#e3e6f0] bg-white shadow-[0_2.4px_28px_rgba(58,59,69,0.15)]">
      <header className="flex h-[52px] items-center justify-between rounded-t-[5px] border-b border-[#e3e6f0] bg-[#f8f9fc] px-5">
        <h6 className="-mt-[3px] text-[17px] leading-6 font-medium tracking-[0.3px] text-[#4e73df]">{title}</h6>
        {menu && <FaEllipsisV className="mr-px size-[14px] text-[#d1d3e2]" />}
      </header>
      {children}
    </section>
  );
}

export default function App() {
  return (
    <div className="flex h-[1079px] w-[1920px] overflow-hidden bg-[#f8f9fc] font-['Open_Sans','Noto_Sans_CJK_KR',sans-serif] text-[#858796]">
      <aside className="relative z-10 h-[2400px] w-56 shrink-0 bg-[linear-gradient(180deg,#4e73df_10%,#224abe_100%)] px-4 text-white">
        <div className="flex h-[70px] items-center pl-[19px]">
          <FaLaughWink className="size-8 -rotate-[15deg]" />
          <div className="ml-4 text-[16px] leading-none font-bold tracking-[1px]">
            CORONA<sup className="text-[12px]">IS</sup>
          </div>
        </div>
        <hr className="border-t-2 border-white/15" />
        <div className="mt-[18px] text-[10.4px] leading-3 font-bold tracking-[0.1px] text-white/40">CORONAIS</div>
        <a className="mt-[16px] flex items-center pl-0.5 text-[14px] leading-6 tracking-[0.5px]">
          <FaWrench className="mr-[10px] size-[14px] text-white/30" />
          <span>코로나 뉴스 모아보기</span>
        </a>
      </aside>

      <main className="flex min-w-0 flex-1 flex-col">
        <div className="flex h-[70px] shrink-0 items-center bg-white pl-8 shadow-[0_2.4px_28px_rgba(58,59,69,0.15)]">
          <div className="flex h-[38px] w-[360px] items-center rounded-l-[5.6px] bg-[#f8f9fc] pl-3 text-[12.6px] text-[#858796]">Search for...</div>
          <button className="flex h-[38px] w-10 items-center justify-center rounded-r-[5.6px] bg-[#4e73df] text-white">
            <FaSearch className="size-[14px]" />
          </button>
        </div>
        <div className="px-6">
          <h1 className="mt-4 mb-[25px] h-10 text-[29px] leading-10 tracking-[1.3px] font-[350] text-[#5a5c69] font-['Noto_Sans_CJK_KR']">코로나 전국 현황</h1>
          <div className="grid grid-cols-4 gap-6">
            {stats.map((s) => (
              <div key={s.label} className={`flex h-[110px] flex-col justify-center rounded-[5.6px] border border-l-4 border-[#e3e6f0] ${s.border} bg-white pt-[3px] pl-5 shadow-[0_2.4px_28px_rgba(58,59,69,0.15)]`}>
                <div className={`mb-1 text-[17px] leading-6 font-medium tracking-[0.3px] ${s.text}`}>{s.label}</div>
                <div className="mb-1 text-[20px] leading-6 font-semibold tracking-[0.6px] text-[#5a5c69]">{s.value}</div>
              </div>
            ))}
          </div>
          <div className="mt-6 grid grid-cols-2 items-start gap-6">
            <Panel title="확진자 추이 지도" menu>
              <div className="relative mt-5 mr-5 mb-10 ml-7">
                <CoronaMap />
                <button className="absolute top-0 left-[10px] flex h-5 w-[26px] items-start justify-center rounded-b-[3px] bg-white shadow-[0_1px_5px_rgba(0,0,0,0.65)] [clip-path:inset(0_-8px_-8px_-8px)]">
                  <span className="mt-[6px] h-[2px] w-[10px] bg-black" />
                </button>
              </div>
            </Panel>
            <div className="flex flex-col gap-6">
              <Panel title="성별 치명률" menu><PieChart /></Panel>
              <Panel title="연령별 치명률"><BarChart /></Panel>
            </div>
          </div>
        </div>
      </main>

      <div className="flex w-[17px] shrink-0 flex-col items-center justify-between bg-[#f1f1f1]">
        <div className="flex flex-col items-center">
          <div className="flex h-[17px] items-center"><div className="border-x-4 border-b-4 border-x-transparent border-b-[#a3a3a3]" /></div>
          <div className="h-[469px] w-[13px] bg-[#c1c1c1]" />
        </div>
        <div className="flex h-[17px] items-center"><div className="border-x-4 border-t-4 border-x-transparent border-t-[#505050]" /></div>
      </div>
    </div>
  );
}
